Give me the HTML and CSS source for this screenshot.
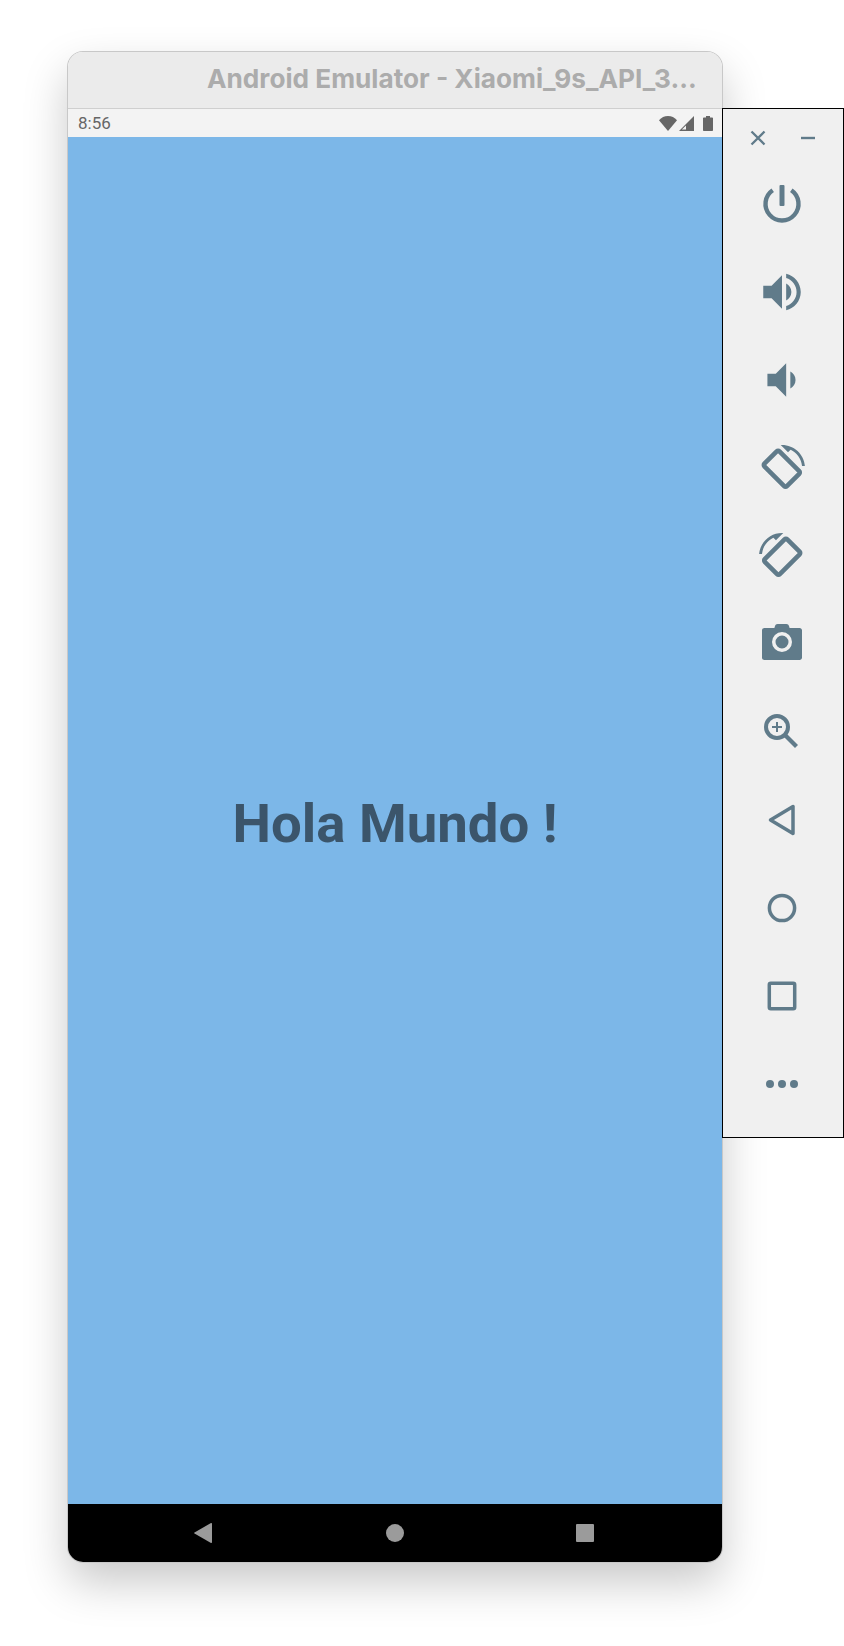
FILE: index.html
```html
<!DOCTYPE html>
<html>
	<head>
		<meta name="viewport" content="width=device-width, initial-scale=1" />
		<title>Android Emulator</title>
		<link rel="stylesheet" href="styles.css">
	</head>
	<body>
		<div class="window">
			<div class="titleBar">Android Emulator - Xiaomi_9s_API_3...</div>
			<div class="statusBar">
				<span class="clock">8:56</span>
				<div class="statusIcons">
					<svg class="wifi" width="18" height="15" viewBox="0 0 18 15"><path d="M0 4.200C2.400 1.600 5.500 0 9 0s6.600 1.600 9 4.200L9 15z"/></svg>
					<svg class="signal" width="15" height="15" viewBox="0 0 15 15"><path d="M15 0v15H0z"/><path d="M7 9.500v4.100H2.900z" fill="#f3f3f3"/></svg>
					<svg class="battery" width="10" height="15" viewBox="0 0 10 15"><path d="M3 0h4v1.400h2.200c.5 0 .8.3.8.8v12c0 .5-.3.8-.8.8H.8c-.5 0-.8-.3-.8-.8v-12c0-.5.3-.8.8-.8H3z"/></svg>
				</div>
			</div>
			<div class="screen">
				<h1 class="greeting">Hola Mundo !</h1>
			</div>
			<div class="navBar">
				<svg width="18" height="20" viewBox="0 0 18 20"><path d="M17 0c.6 0 1 .4 1 1v18c0 .6-.4 1-1 1L.5 10.600c-.6-.4-.6-.8 0-1.200z"/></svg>
				<svg class="homeKey" width="18" height="18" viewBox="0 0 18 18"><circle cx="9" cy="9" r="9"/></svg>
				<svg width="18" height="18" viewBox="0 0 18 18"><rect width="18" height="18" rx="1"/></svg>
			</div>
		</div>

		<div class="sidePanel">
			<div class="panelHeader">
				<svg class="icon" width="20" height="20" viewBox="0 0 20 20"><path d="M3.500 3.500l13 13M16.500 3.500l-13 13" fill="none" stroke-width="2.300"/></svg>
				<svg class="icon" width="20" height="20" viewBox="0 0 20 20"><path d="M3 10h14" fill="none" stroke-width="2.400"/></svg>
			</div>

			<!-- power -->
			<div class="tool">
				<svg class="icon" width="44" height="44" viewBox="0 0 44 44"><path d="M12.700 8.300a16.500 16.500 0 1 0 18.600 0" fill="none" stroke-width="4.400"/><rect x="19.500" y="3" width="5" height="21" rx="1" class="solid"/></svg>
			</div>
			<!-- volume up -->
			<div class="tool">
				<svg class="solid" width="50" height="50" viewBox="0 0 24 24"><path d="M3 9v6h4l5 5V4L7 9H3zm13.500 3c0-1.770-1.020-3.290-2.500-4.030v8.050c1.480-.73 2.500-2.250 2.500-4.020zM14 3.230v2.060c2.890.86 5 3.540 5 6.710s-2.110 5.850-5 6.710v2.060c4.010-.91 7-4.490 7-8.770s-2.990-7.860-7-8.770z"/></svg>
			</div>
			<!-- volume down -->
			<div class="tool">
				<svg class="solid" width="50" height="50" viewBox="0 0 24 24"><path d="M18.500 12c0-1.770-1.020-3.290-2.500-4.030v8.050c1.480-.73 2.500-2.250 2.500-4.020zM5 9v6h4l5 5V4L9 9H5z"/></svg>
			</div>
			<!-- rotate -->
			<div class="tool">
				<svg class="solid" width="46" height="46" viewBox="0 0 24 24"><path d="M16.480 2.520c3.270 1.550 5.610 4.720 5.970 8.480h1.500C23.440 4.840 18.290 0 12 0l-.66.030 3.810 3.810 1.330-1.320z"/><rect class="phone" x="6.350" y="4.100" width="11.100" height="16.600" rx="1" transform="rotate(-45 11.900 12.400)"/></svg>
			</div>
			<div class="tool">
				<svg class="solid mirrored" width="46" height="46" viewBox="0 0 24 24"><path d="M16.480 2.520c3.270 1.550 5.610 4.720 5.970 8.480h1.500C23.440 4.840 18.290 0 12 0l-.66.030 3.810 3.810 1.330-1.320z"/><rect class="phone" x="6.350" y="4.100" width="11.100" height="16.600" rx="1" transform="rotate(-45 11.900 12.400)"/></svg>
			</div>
			<!-- camera -->
			<div class="tool">
				<svg class="solid" width="44" height="44" viewBox="0 0 44 44"><path fill-rule="evenodd" d="M15 4c.4-1.300 1.200-2 2.600-2h8.800c1.400 0 2.200.7 2.600 2l.6 2H39.500C41 6 42 7 42 8.500v27c0 1.500-1 2.500-2.500 2.500h-35C3 38 2 37 2 35.500v-27C2 7 3 6 4.500 6h9.900zM22 10a10 10 0 1 0 0 20 10 10 0 0 0 0-20zm0 3.500a6.500 6.500 0 1 1 0 13 6.500 6.500 0 0 1 0-13z"/></svg>
			</div>
			<!-- zoom -->
			<div class="tool">
				<svg class="icon" width="44" height="44" viewBox="0 0 44 44"><circle cx="17" cy="17" r="11" fill="none" stroke-width="4"/><path d="M25.500 25.500L36.500 36.500" fill="none" stroke-width="4.200"/><path d="M17 12v10M12 17h10" fill="none" stroke-width="2"/></svg>
			</div>
			<!-- back, home, overview -->
			<div class="tool">
				<svg class="icon" width="44" height="44" viewBox="0 0 44 44"><path d="M33 8.500v27L10.500 22z" fill="none" stroke-width="3.500" stroke-linejoin="round"/></svg>
			</div>
			<div class="tool">
				<svg class="icon" width="44" height="44" viewBox="0 0 44 44"><circle cx="22" cy="22" r="12.600" fill="none" stroke-width="3.500"/></svg>
			</div>
			<div class="tool">
				<svg class="icon" width="44" height="44" viewBox="0 0 44 44"><rect x="9.300" y="9.300" width="25.400" height="25.400" rx="1.500" fill="none" stroke-width="3.500"/></svg>
			</div>
			<div class="tool">
				<svg class="solid" width="44" height="44" viewBox="0 0 44 44"><circle cx="10" cy="22" r="4"/><circle cx="22" cy="22" r="4"/><circle cx="34" cy="22" r="4"/></svg>
			</div>
		</div>
	</body>
</html>
```

FILE: styles.css
```css
html {
	background: #ffffff;
}
body {
	margin: 0;
	width: 844px;
	height: 1646px;
	padding: 52px 0 0 68px;
	box-sizing: border-box;
	display: flex;
	align-items: flex-start;
	overflow: hidden;
	font-family: Roboto, sans-serif;
}

.window {
	width: 654px;
	height: 1510px;
	display: flex;
	flex-direction: column;
	border-radius: 15px;
	overflow: hidden;
	box-shadow: 0 0 0 1px #c8c8c8, 0 20px 45px rgba(0, 0, 0, 0.22);
}
.titleBar {
	height: 57px;
	box-sizing: border-box;
	padding: 0 0 4px 139px;
	display: flex;
	align-items: center;
	background: #ebebeb;
	border-bottom: 1px solid #cfcfcf;
	color: #acacac;
	font-family: Inter, sans-serif;
	font-size: 26.2px;
	font-weight: 700;
	white-space: nowrap;
}
.statusBar {
	height: 28px;
	padding: 0 9px 0 10px;
	display: flex;
	align-items: center;
	justify-content: space-between;
	background: #f3f3f3;
	color: #666666;
	font-size: 17px;
}
.statusIcons {
	display: flex;
	align-items: center;
	fill: #666666;
}
.statusIcons .signal {
	margin: 0 9px 0 2px;
}
.screen {
	flex: 1;
	padding-top: 4px;
	display: flex;
	align-items: center;
	justify-content: center;
	background: #7cb7e8;
}
.greeting {
	margin: 0;
	color: #3b556b;
	font-size: 54.5px;
	font-weight: 700;
}
.navBar {
	height: 58px;
	padding: 0 128px 0 126px;
	box-sizing: border-box;
	display: flex;
	align-items: center;
	justify-content: space-between;
	background: #000000;
	fill: #9b9b9b;
}
.homeKey {
	margin-left: 2px;
}

.sidePanel {
	width: 122px;
	margin-top: 56px;
	padding: 0 2px 9px 0;
	box-sizing: border-box;
	background: #f0f0f0;
	border: 1px solid #000000;
}
.panelHeader {
	height: 58px;
	margin-bottom: -7px;
	padding-left: 25px;
	display: flex;
	align-items: center;
	gap: 30px;
}
.tool {
	height: 88px;
	display: flex;
	align-items: center;
	justify-content: center;
}
.icon {
	stroke: #607b8a;
}
.solid {
	fill: #607b8a;
	stroke: none;
}
.phone {
	fill: none;
	stroke: #607b8a;
	stroke-width: 2.4;
}
.mirrored {
	transform: scaleX(-1);
}
```
